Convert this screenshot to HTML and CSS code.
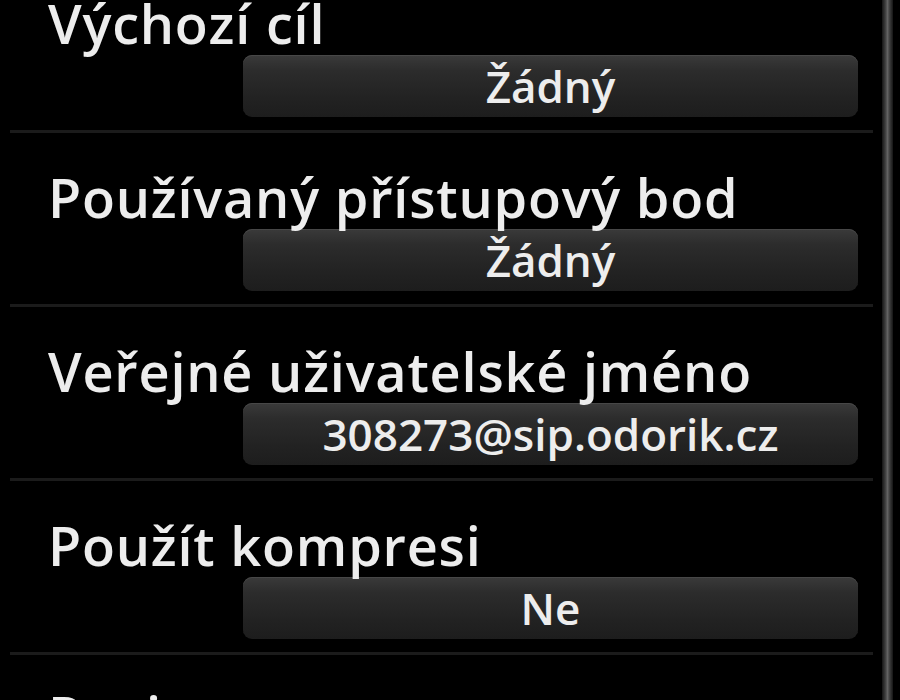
FILE: index.html
```html
<!DOCTYPE html>
<html lang="cs">
<head>
<meta charset="utf-8">
<title>Nastavení SIP</title>
<link rel="stylesheet" href="styles.css">
</head>
<body>
<div class="screen">
  <div class="list">
    <div class="row">
      <div class="label">Výchozí cíl</div>
      <div class="value">Žádný</div>
    </div>
    <div class="row">
      <div class="label">Používaný přístupový bod</div>
      <div class="value">Žádný</div>
    </div>
    <div class="row">
      <div class="label">Veřejné uživatelské jméno</div>
      <div class="value">308273@sip.odorik.cz</div>
    </div>
    <div class="row">
      <div class="label">Použít kompresi</div>
      <div class="value">Ne</div>
    </div>
    <div class="row last">
      <div class="label">Registrace</div>
    </div>
  </div>
  <div class="scroll"></div>
</div>
</body>
</html>
```

FILE: styles.css
```css
html, body {
  margin: 0;
  padding: 0;
  background: #000;
  width: 900px;
  height: 700px;
  overflow: hidden;
}

.screen {
  display: flex;
  height: 700px;
  font-family: "Open Sans", "Noto Sans", sans-serif;
  color: #ededed;
}

.list {
  flex: 1;
  margin-left: 10px;
  margin-top: -41px;
}

.row {
  height: 174px;
  box-sizing: border-box;
  padding: 34px 15px 0 38px;
  border-bottom: 3px solid #1b1b1b;
}

.row.last {
  padding-top: 30px;
  border-bottom: none;
}

.label {
  font-size: 54px;
  font-weight: 600;
  letter-spacing: 0.8px;
  line-height: 60px;
  height: 60px;
  white-space: nowrap;
}

.value {
  margin: 2px 0 0 195px;
  height: 62px;
  border-radius: 9px;
  background: linear-gradient(#3a3a3a, #2c2c2c 25%, #222 70%, #1d1d1d);
  box-shadow: inset 0 1px 0 #474747;
  text-align: center;
  font-size: 44px;
  font-weight: 600;
  line-height: 62px;
  white-space: nowrap;
}

.scroll {
  width: 11px;
  margin: 0 7px 0 9px;
  background: linear-gradient(to right, #151515, #3e3e3e 30%, #636363 50%, #3e3e3e 70%, #151515);
}
```
